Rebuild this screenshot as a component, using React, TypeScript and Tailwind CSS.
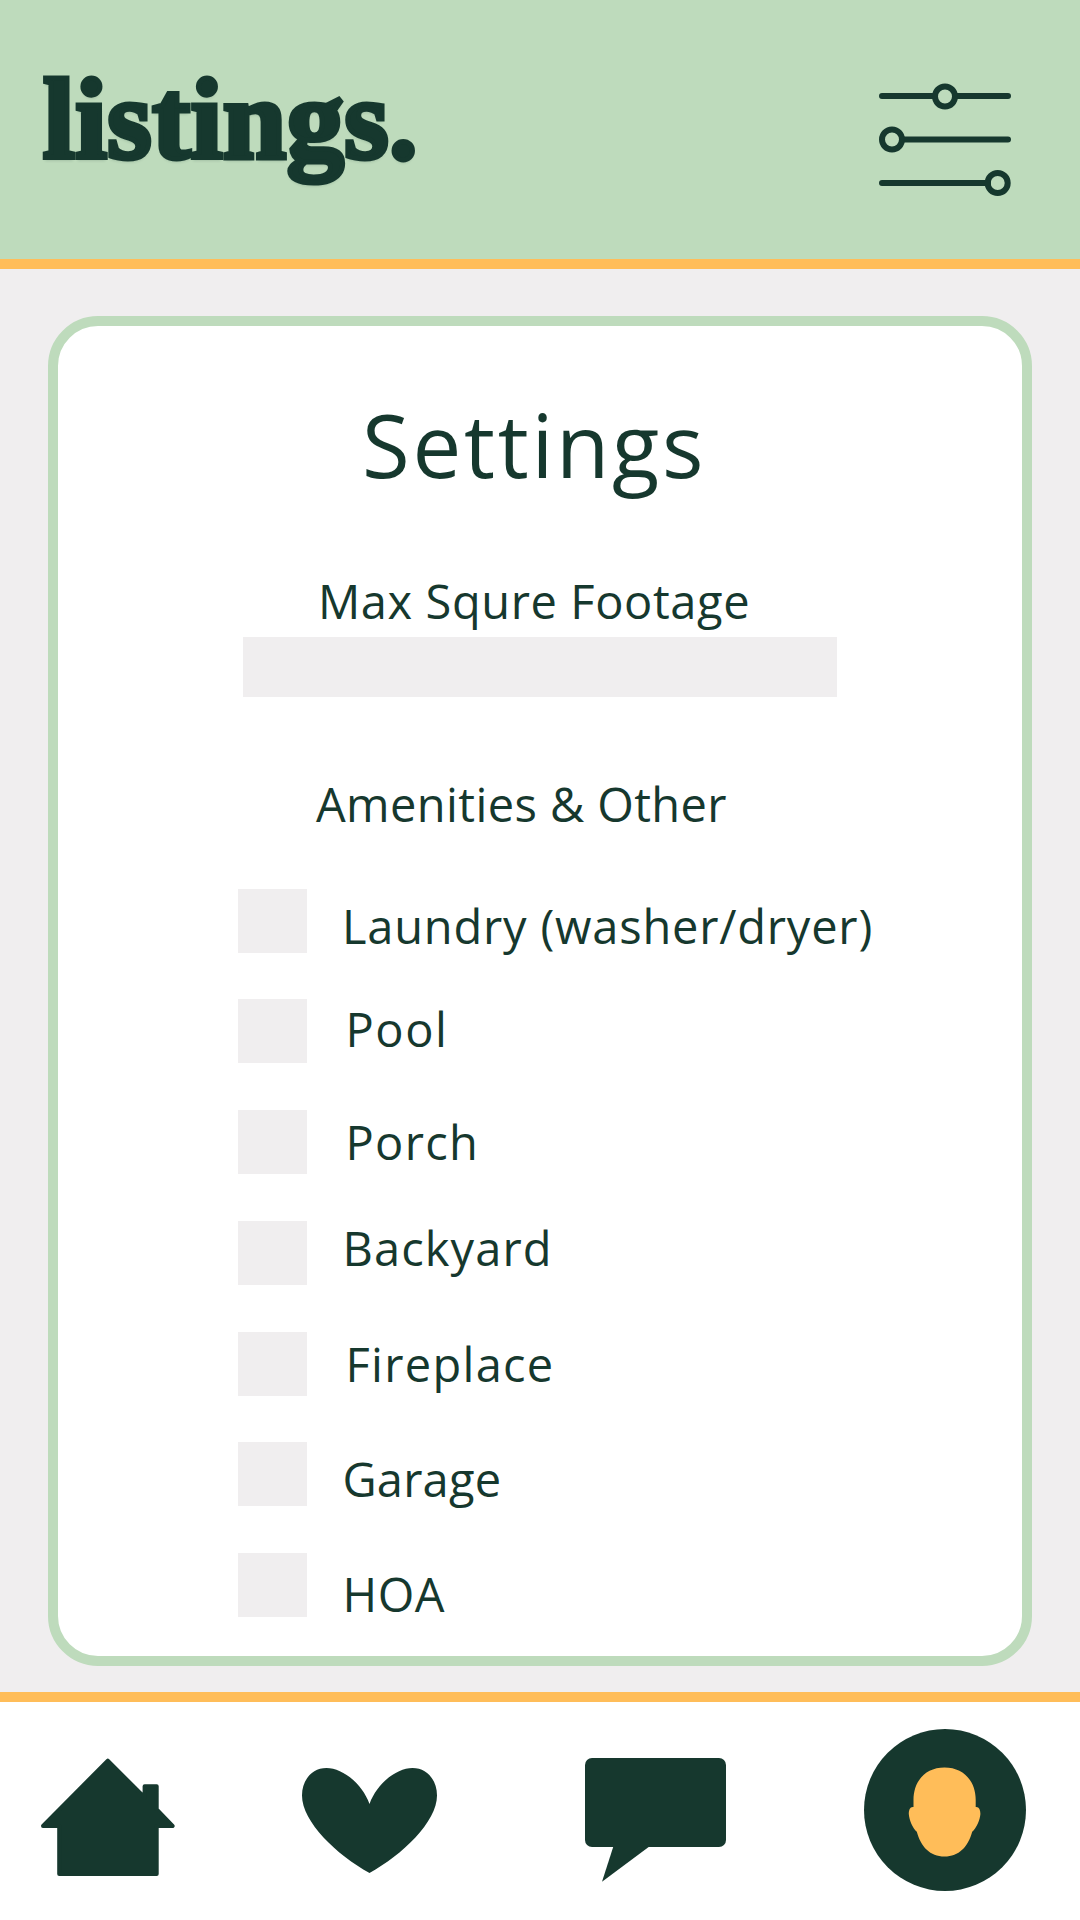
const amenities = [
  { name: "Laundry (washer/dryer)", pos: "ml-[35px] mt-[5px] tracking-[0.8px]" },
  { name: "Pool", pos: "ml-[38.5px] -mt-[2px] tracking-[1.6px]" },
  { name: "Porch", pos: "ml-[38.5px] tracking-[1.3px]" },
  { name: "Backyard", pos: "ml-[35.5px] -mt-[5px] tracking-[1.1px]" },
  { name: "Fireplace", pos: "ml-[38.5px] tracking-[1.3px]" },
  { name: "Garage", pos: "ml-[35.5px] mt-[5px] tracking-[0.2px]" },
  { name: "HOA", pos: "ml-[35.5px] mt-[9px] tracking-[0.5px]" },
];

function SlidersIcon() {
  return (
    <svg width="132" height="114" viewBox="0 0 132 114" fill="none" stroke="#16382e" strokeWidth="6" strokeLinecap="round">
      <path d="M3 13H56M76 13H129M23 56.5H129M3 100H109" />
      <circle cx="66" cy="13.5" r="10" />
      <circle cx="13" cy="56.5" r="10" />
      <circle cx="118.7" cy="100" r="10" />
    </svg>
  );
}

function HomeIcon() {
  return (
    <svg width="136" height="120" viewBox="0 0 136 120" fill="#16382e" stroke="#16382e" strokeWidth="4" strokeLinejoin="round">
      <path d="M67.8 2.6L104.6 39.5V28.2H116.7V51.5L132.6 68H116.7V116H19.2V68H3Z" />
    </svg>
  );
}

function HeartIcon() {
  return (
    <svg width="136" height="105" viewBox="0 0 136 105" fill="#16382e">
      <path d="M67.5 36C60 15 40 0 24.5 0C10 0 0 12 0 27.5C0 54 35 87 67.5 105C100 87 135 54 135 27.5C135 12 125 0 110.5 0C95 0 75 15 67.5 36Z" />
    </svg>
  );
}

function ChatIcon() {
  return (
    <svg width="141" height="124" viewBox="0 0 141 124" fill="#16382e">
      <rect width="141" height="89" rx="7" />
      <path d="M28.5 88L17 123.7L65 88Z" />
    </svg>
  );
}

function ProfileIcon() {
  return (
    <svg width="162" height="162" viewBox="0 0 162 162">
      <circle cx="81" cy="81" r="81" fill="#16382e" />
      <path
        fill="#ffbd59"
        d="M80.5 38.6C61.5 38.6 49.5 52 49.5 71V78C46 77.5 44.8 81 44.8 85C45.2 91 48.5 99 52.8 102.8C57 118 66 127.6 80.5 127.6C95 127.6 104 118 108.2 102.8C112.5 99 116 91 116.4 85C116.4 81 115 77.5 111.7 78V71C111.7 52 99.5 38.6 80.5 38.6Z"
      />
    </svg>
  );
}

export default function App() {
  return (
    <div className="flex h-[1920px] w-[1080px] flex-col overflow-hidden bg-[#f0eeef] font-['Open_Sans',sans-serif] text-[#16382e]">
      {/* Header */}
      <header className="flex h-[269px] shrink-0 items-start justify-between border-b-[10px] border-[#ffbd59] bg-[#bedbbc] pl-[43px] pr-[69px]">
        <h1 className="mt-[51px] font-['Liberation_Serif',serif] text-[114px] leading-[138px] font-bold tracking-[0.5px] [-webkit-text-stroke:5px_#16382e] [text-shadow:0_3px_3px_rgba(22,56,46,0.2)]">
          listings.
        </h1>
        <button className="mt-[83px]">
          <SlidersIcon />
        </button>
      </header>

      {/* Settings card */}
      <main className="mx-[48px] mt-[47px] h-[1350px] shrink-0 rounded-[50px] border-[10px] border-[#bedbbc] bg-white">
        <h2 className="ml-[304px] mt-[59px] text-[87px] leading-[118px] tracking-[2.7px] whitespace-nowrap">Settings</h2>

        <label className="ml-[260px] mt-[66px] block text-[47px] leading-[64px] tracking-[0.6px] whitespace-nowrap">Max Squre Footage</label>
        <div className="ml-[185px] mt-[4px] h-[60px] w-[594px] bg-[#f0eeef]" />

        <h3 className="ml-[258px] mt-[75px] text-[47px] leading-[64px] tracking-[0.4px] whitespace-nowrap">Amenities & Other</h3>
        <ul className="ml-[180px] mt-[52.6px] flex flex-col gap-[46.75px]">
          {amenities.map((a) => (
            <li key={a.name} className="flex h-[64px] items-start">
              <span className="h-[64px] w-[69px] shrink-0 bg-[#f0eeef]" />
              <span className={`text-[47px] leading-[64px] whitespace-nowrap ${a.pos}`}>{a.name}</span>
            </li>
          ))}
        </ul>
      </main>

      {/* Bottom nav */}
      <nav className="mt-[26px] flex grow items-start border-t-[10px] border-[#ffbd59] bg-white">
        <button className="ml-[40px] mt-[56px]">
          <HomeIcon />
        </button>
        <button className="ml-[126px] mt-[66px]">
          <HeartIcon />
        </button>
        <button className="ml-[147px] mt-[56px]">
          <ChatIcon />
        </button>
        <button className="ml-[138px] mt-[27px]">
          <ProfileIcon />
        </button>
      </nav>
    </div>
  );
}
